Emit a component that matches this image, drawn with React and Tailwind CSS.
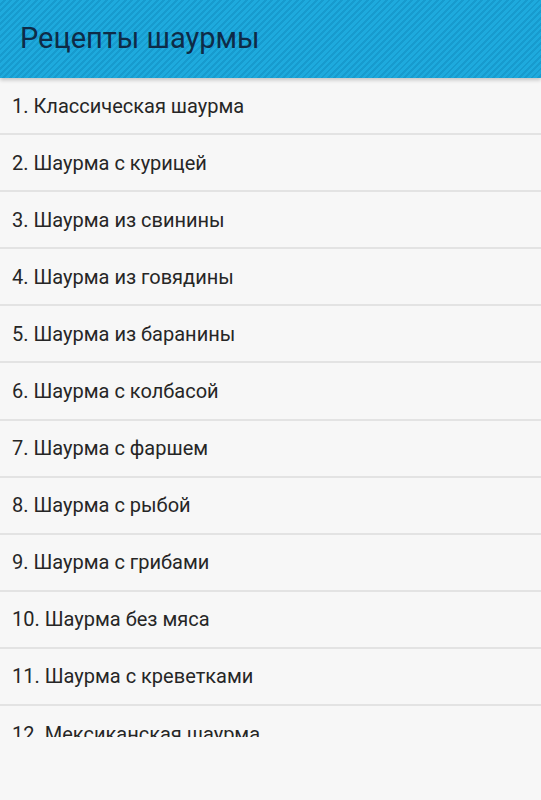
const recipes = [
  '1. Классическая шаурма',
  '2. Шаурма с курицей',
  '3. Шаурма из свинины',
  '4. Шаурма из говядины',
  '5. Шаурма из баранины',
  '6. Шаурма с колбасой',
  '7. Шаурма с фаршем',
  '8. Шаурма с рыбой',
  '9. Шаурма с грибами',
  '10. Шаурма без мяса',
  '11. Шаурма с креветками',
  '12. Мексиканская шаурма',
]

export default function App() {
  return (
    <div
      className="w-[541px] h-[800px] bg-[#f7f7f7] flex flex-col overflow-hidden"
      style={{ fontFamily: 'Roboto, "Noto Sans", sans-serif' }}
    >
      {/* Action bar with striped background */}
      <header className="relative z-10 h-[78px] flex-shrink-0 flex items-center px-[20px] bg-[repeating-linear-gradient(135deg,#1eaadd_0px,#1eaadd_2.5px,#179bce_2.5px,#179bce_4.5px)] shadow-[0_2px_4px_rgba(0,0,0,0.22)]">
        <h1 className="text-[29px] text-[#0e2b47] leading-none pb-[2px]">Рецепты шаурмы</h1>
      </header>

      {/* list is cut off mid-row at the bottom, like a scrolled view */}
      <ul className="h-[659px] overflow-hidden flex-shrink-0">
        {recipes.map((r) => (
          <li
            key={r}
            className="h-[57.1px] flex items-center px-[12px] border-b-2 border-[#e3e3e3] text-[20px] text-[#262626]"
          >
            {r}
          </li>
        ))}
      </ul>
    </div>
  )
}
